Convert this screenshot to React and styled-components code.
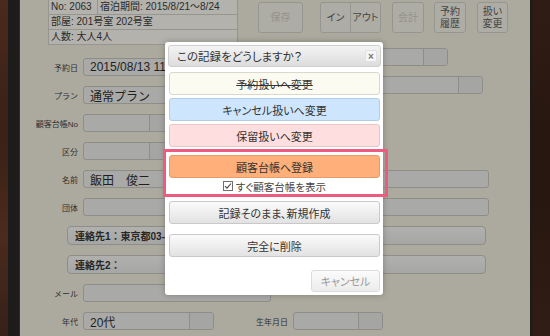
import React from "react";
import styled, { createGlobalStyle } from "styled-components";

const GlobalStyle = createGlobalStyle`
  body {
    margin: 0;
    font-family: "Liberation Sans", "Noto Sans CJK JP", sans-serif;
  }
`;

const Frame = styled.div`
  position: relative;
  display: flex;
  width: 550px;
  height: 336px;
  overflow: hidden;
  background: #35201a;
`;

const WoodLeft = styled.div`
  width: 8px;
  background: linear-gradient(180deg, #4a2a1e 0%, #3a2016 40%, #4b2b1d 70%, #36201a 100%);
`;

const Binding = styled.div`
  width: 11px;
  background: #1d1c1b;
  border-right: 1px solid #2e2c29;
`;

const Paper = styled.div`
  width: 510px;
  background: #acaa9e;
  color: #2a2a2a;
`;

const WoodRight = styled.div`
  flex: 1;
  border-left: 2px solid #1c1b1a;
  background: linear-gradient(180deg, #2f1c15 0%, #26160f 50%, #301d15 100%);
`;

const Header = styled.div`
  display: flex;
  align-items: flex-start;
  height: 44px;
  padding-left: 28px;
`;

const InfoTable = styled.div`
  width: 188px;
  border: 1px solid #96958f;
  border-top: none;
  background: #b3b2ad;
  font-size: 10px;
  color: #2b2b2b;
`;

const InfoRow = styled.div`
  display: flex;
  height: 14px;
  line-height: 14px;
  border-top: 1px solid #96958f;
  &:first-child { border-top: none; }
`;

const InfoCell = styled.div`
  width: ${p => p.$w || "auto"};
  flex: ${p => (p.$w ? "none" : 1)};
  padding-left: 2px;
  white-space: nowrap;
  & + & { border-left: 1px solid #96958f; }
`;

const Toolbar = styled.div`
  display: flex;
  margin: 2px 0 0 20px;
  font-feature-settings: "palt";
`;

const ToolButton = styled.div`
  display: flex;
  align-items: center;
  justify-content: center;
  box-sizing: border-box;
  width: ${p => p.$w}px;
  height: 31px;
  margin-left: ${p => p.$gap || 0}px;
  border: 1px solid #96958f;
  border-radius: 3px;
  background: #adaca5;
  font-size: 10px;
  line-height: 12px;
  text-align: center;
  white-space: nowrap;
  color: ${p => (p.$disabled ? "#93928b" : "#454545")};
`;

const ToolHalf = styled.div`
  flex: 1;
  display: flex;
  align-items: center;
  justify-content: center;
  height: 100%;
  & + & { border-left: 1px solid #96958f; }
`;

const TopSplit = styled.div`
  display: flex;
  margin-top: 4px;
`;

const Column = styled.div`
  display: flex;
  flex-direction: column;
  gap: 10px;
  padding-top: ${p => p.$pad || 0}px;
  margin-left: ${p => p.$left || 0}px;
`;

const Form = styled.div`
  display: flex;
  flex-direction: column;
  gap: 10px;
  margin-top: 10px;
`;

const FieldRow = styled.div`
  display: flex;
  align-items: center;
  gap: 5px;
  height: ${p => p.$h || 18}px;
`;

const Label = styled.div`
  width: ${p => p.$w || 58}px;
  text-align: right;
  font-size: 8px;
  color: #303030;
  white-space: nowrap;
`;

const TextBox = styled.div`
  display: flex;
  align-items: center;
  box-sizing: border-box;
  width: ${p => p.$w}px;
  height: ${p => p.$h || 18}px;
  padding-left: 6px;
  border: 1px solid #8e8d88;
  border-radius: 3px;
  background: #a9a9a7;
  font-size: 12px;
  color: #1f1f1f;
  white-space: nowrap;
  overflow: hidden;
`;

const SelectBox = styled.div`
  display: flex;
  box-sizing: border-box;
  width: ${p => p.$w}px;
  height: ${p => p.$h || 18}px;
  border: 1px solid #8e8d88;
  border-radius: 3px;
  background: #a9a9a7;
  overflow: hidden;
`;

const SelectValue = styled.div`
  flex: 1;
  display: flex;
  align-items: center;
  padding-left: 6px;
  font-size: 12px;
  color: #1f1f1f;
`;

const SelectArrow = styled.div`
  width: 23px;
  border-left: 1px solid #8e8d88;
  background: #a5a5a3;
`;

const ContactRow = styled.div`
  padding-left: 47px;
`;

const ContactBox = styled.div`
  display: flex;
  align-items: center;
  box-sizing: border-box;
  width: 419px;
  height: 19px;
  padding-left: 7px;
  border: 1px solid #8e8d88;
  border-radius: 4px;
  background: linear-gradient(180deg, #b0b0ae 0%, #a6a6a4 100%);
  font-size: 10px;
  font-weight: bold;
  color: #262626;
  white-space: nowrap;
  overflow: hidden;
`;

const Modal = styled.div`
  position: absolute;
  left: 165px;
  top: 42px;
  box-sizing: border-box;
  width: 218px;
  height: 253px;
  padding: 3px 2px 3px 3px;
  display: flex;
  flex-direction: column;
  background: #fff;
  border-radius: 3px;
  box-shadow: 0 0 6px rgba(0, 0, 0, 0.25);
  font-feature-settings: "palt";
`;

const TitleBar = styled.div`
  display: flex;
  align-items: center;
  justify-content: space-between;
  box-sizing: border-box;
  height: 22px;
  padding: 0 3px 0 8px;
  border: 1px solid #cfcfcf;
  border-radius: 3px;
  background: linear-gradient(180deg, #f4f4f4 0%, #dcdcdc 100%);
  font-size: 11.5px;
  color: #333;
`;

const CloseButton = styled.div`
  display: flex;
  align-items: center;
  justify-content: center;
  box-sizing: border-box;
  width: 12px;
  height: 12px;
  border: 1px solid #e0e0e0;
  border-radius: 2px;
  background: #f6f6f6;
  font-size: 10px;
  font-weight: bold;
  color: #777;
`;

const tones = {
  cream: { bg: "#fbfbf1", border: "#d8d8cc" },
  blue: { bg: "#cde6fd", border: "#b3cde4" },
  pink: { bg: "#ffdedf", border: "#e6c6c6" },
  orange: { bg: "#ffb07a", border: "#e89c69" },
  plain: { bg: "linear-gradient(180deg, #fbfbfb 0%, #ececec 60%, #e2e2e2 100%)", border: "#c9c9c9" },
};

const ActionButton = styled.div`
  display: flex;
  align-items: center;
  justify-content: center;
  box-sizing: border-box;
  height: 23px;
  margin: ${p => p.$top || 0}px 1px 0;
  border: 1px solid ${p => tones[p.$tone].border};
  border-radius: 3px;
  background: ${p => tones[p.$tone].bg};
  font-size: 11px;
  color: #333;
  text-decoration: ${p => (p.$strike ? "line-through" : "none")};
`;

const Highlight = styled.div`
  margin: 2px -7px 0 -5px;
  padding: 3px 4px 0 2px;
  border: 3px solid #ee5a80;
`;

const CheckRow = styled.label`
  display: flex;
  align-items: center;
  justify-content: center;
  gap: 3px;
  height: 16px;
  font-size: 10.5px;
  color: #444;
`;

const CheckBox = styled.span`
  display: flex;
  align-items: center;
  justify-content: center;
  box-sizing: border-box;
  width: 10px;
  height: 10px;
  border: 1px solid #6f6f6f;
  background: #fff;
`;

const CancelButton = styled.div`
  align-self: flex-end;
  display: flex;
  align-items: center;
  justify-content: center;
  box-sizing: border-box;
  width: 69px;
  height: 22px;
  margin: 13px 1px 0 0;
  border: 1px solid #dcdcdc;
  border-radius: 3px;
  background: linear-gradient(180deg, #fbfbfb 0%, #ececec 100%);
  font-size: 11px;
  color: #9a9a9a;
`;

const Select = ({ w, value }) => (
  <SelectBox $w={w}>
    <SelectValue>{value}</SelectValue>
    <SelectArrow />
  </SelectBox>
);

const App = () => {
  return (
    <>
      <GlobalStyle />
      <Frame>
        <WoodLeft />
        <Binding />
        <Paper>
          <Header>
            <InfoTable>
              <InfoRow>
                <InfoCell $w="46px">No: 2063</InfoCell>
                <InfoCell>宿泊期間: 2015/8/21～8/24</InfoCell>
              </InfoRow>
              <InfoRow>
                <InfoCell>部屋: 201号室 202号室</InfoCell>
              </InfoRow>
              <InfoRow>
                <InfoCell>人数: 大人4人</InfoCell>
              </InfoRow>
            </InfoTable>
            <Toolbar>
              <ToolButton $w={45} $disabled>保存</ToolButton>
              <ToolButton $w={61} $gap={17}>
                <ToolHalf>イン</ToolHalf>
                <ToolHalf>アウト</ToolHalf>
              </ToolButton>
              <ToolButton $w={32} $gap={11} $disabled>会計</ToolButton>
              <ToolButton $w={32} $gap={10}>予約<br />履歴</ToolButton>
              <ToolButton $w={31} $gap={11}>扱い<br />変更</ToolButton>
            </Toolbar>
          </Header>

          <TopSplit>
            <Column $pad={10}>
              <FieldRow>
                <Label>予約日</Label>
                <TextBox $w={200}>2015/08/13 11:15</TextBox>
              </FieldRow>
              <FieldRow>
                <Label>プラン</Label>
                <TextBox $w={200}>通常プラン</TextBox>
              </FieldRow>
            </Column>
            <Column $left={18}>
              <Select w={147} />
              <Select w={182} />
            </Column>
          </TopSplit>

          <Form>
            <FieldRow>
              <Label>顧客台帳No</Label>
              <Select w={91} />
            </FieldRow>
            <FieldRow>
              <Label>区分</Label>
              <Select w={91} />
            </FieldRow>
            <FieldRow>
              <Label>名前</Label>
              <TextBox $w={406}>飯田　俊二</TextBox>
            </FieldRow>
            <FieldRow>
              <Label>団体</Label>
              <TextBox $w={406} />
            </FieldRow>
            <ContactRow>
              <ContactBox>連絡先1：東京都03-1234-5678</ContactBox>
            </ContactRow>
            <ContactRow>
              <ContactBox>連絡先2：</ContactBox>
            </ContactRow>
            <FieldRow>
              <Label>メール</Label>
              <TextBox $w={188} />
            </FieldRow>
            <FieldRow>
              <Label>年代</Label>
              <Select w={131} value="20代" />
              <Label $w={69}>生年月日</Label>
              <Select w={90} />
            </FieldRow>
          </Form>
        </Paper>
        <WoodRight />

        <Modal>
          <TitleBar>
            この記録をどうしますか？
            <CloseButton>×</CloseButton>
          </TitleBar>
          <ActionButton $tone="cream" $top={5} $strike>予約扱いへ変更</ActionButton>
          <ActionButton $tone="blue" $top={3}>キャンセル扱いへ変更</ActionButton>
          <ActionButton $tone="pink" $top={3}>保留扱いへ変更</ActionButton>
          <Highlight>
            <ActionButton $tone="orange">顧客台帳へ登録</ActionButton>
            <CheckRow>
              <CheckBox>
                <svg width="8" height="8" viewBox="0 0 8 8">
                  <path d="M1 4.2 L3 6.2 L7 1.5" fill="none" stroke="#444" strokeWidth="1.1" />
                </svg>
              </CheckBox>
              すぐ顧客台帳を表示
            </CheckRow>
          </Highlight>
          <ActionButton $tone="plain" $top={4}>記録そのまま、新規作成</ActionButton>
          <ActionButton $tone="plain" $top={10}>完全に削除</ActionButton>
          <CancelButton>キャンセル</CancelButton>
        </Modal>
      </Frame>
    </>
  );
};

export default App;
